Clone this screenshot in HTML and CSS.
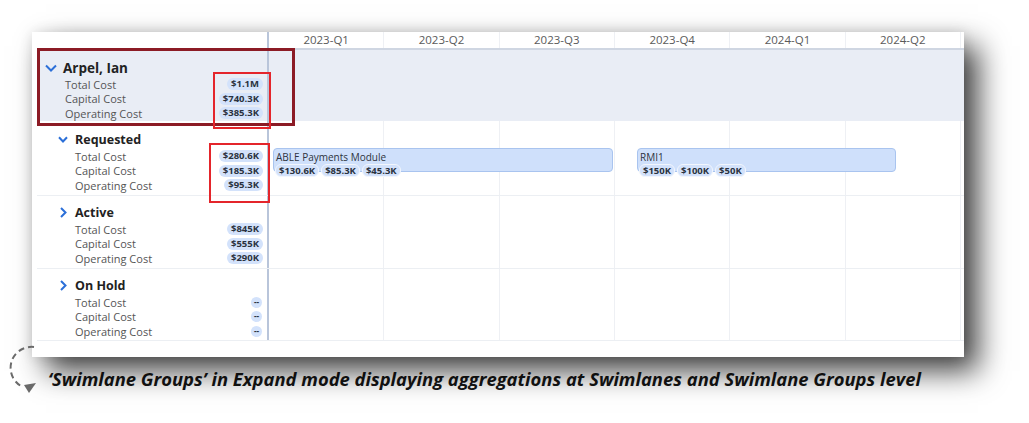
FILE: index.html
```html
<!DOCTYPE html>
<html lang="en">
<head>
    <meta charset="UTF-8">
    <meta name="viewport" content="width=device-width, initial-scale=1.0">
    <title>Swimlane Groups</title>
    <link rel="stylesheet" href="styles.css">
</head>
<body>
    <div class="page">
        <div class="board">
            <div class="head">
                <div class="head-left"></div>
                <div class="quarters">
                    <div class="q">2023-Q1</div>
                    <div class="q">2023-Q2</div>
                    <div class="q">2023-Q3</div>
                    <div class="q">2023-Q4</div>
                    <div class="q">2024-Q1</div>
                    <div class="q">2024-Q2</div>
                </div>
            </div>

            <div class="lanes">
                <!-- group level -->
                <div class="lane group">
                    <div class="info">
                        <div class="title">
                            <svg class="chev" width="12" height="8" viewBox="0 0 12 8"><polyline points="1,1.5 6,6.5 11,1.5" /></svg>
                            Arpel, Ian
                        </div>
                        <div class="metric"><span>Total Cost</span><span class="pill">$1.1M</span></div>
                        <div class="metric"><span>Capital Cost</span><span class="pill">$740.3K</span></div>
                        <div class="metric"><span>Operating Cost</span><span class="pill">$385.3K</span></div>
                    </div>
                    <div class="track"></div>
                </div>

                <div class="lane first">
                    <div class="info">
                        <div class="title">
                            <svg class="chev" width="10" height="7" viewBox="0 0 10 7"><polyline points="1,1.2 5,5.5 9,1.2" /></svg>
                            Requested
                        </div>
                        <div class="metric"><span>Total Cost</span><span class="pill">$280.6K</span></div>
                        <div class="metric"><span>Capital Cost</span><span class="pill">$185.3K</span></div>
                        <div class="metric"><span>Operating Cost</span><span class="pill">$95.3K</span></div>
                    </div>
                    <div class="track">
                        <div class="bar" style="left: 4px; width: 340px;">
                            <div class="bar-name">ABLE Payments Module</div>
                            <div class="bar-pills">
                                <span class="pill">$130.6K</span><span class="pill">$85.3K</span><span class="pill">$45.3K</span>
                            </div>
                        </div>
                        <div class="bar" style="left: 368px; width: 259px;">
                            <div class="bar-name">RMI1</div>
                            <div class="bar-pills">
                                <span class="pill">$150K</span><span class="pill">$100K</span><span class="pill">$50K</span>
                            </div>
                        </div>
                    </div>
                </div>

                <div class="lane">
                    <div class="info">
                        <div class="title">
                            <svg class="chev" width="10" height="11" viewBox="0 0 10 11"><polyline points="3,1 7.5,5.5 3,10" /></svg>
                            Active
                        </div>
                        <div class="metric"><span>Total Cost</span><span class="pill">$845K</span></div>
                        <div class="metric"><span>Capital Cost</span><span class="pill">$555K</span></div>
                        <div class="metric"><span>Operating Cost</span><span class="pill">$290K</span></div>
                    </div>
                    <div class="track"></div>
                </div>

                <div class="lane last">
                    <div class="info">
                        <div class="title">
                            <svg class="chev" width="10" height="11" viewBox="0 0 10 11"><polyline points="3,1 7.5,5.5 3,10" /></svg>
                            On Hold
                        </div>
                        <div class="metric"><span>Total Cost</span><span class="pill empty">--</span></div>
                        <div class="metric"><span>Capital Cost</span><span class="pill empty">--</span></div>
                        <div class="metric"><span>Operating Cost</span><span class="pill empty">--</span></div>
                    </div>
                    <div class="track"></div>
                </div>
            </div>

            <!-- highlight frames -->
            <div class="mark mark-group"></div>
            <div class="mark mark-sum-group"></div>
            <div class="mark mark-sum-lane"></div>
        </div>

        <p class="caption">‘Swimlane Groups’ in Expand mode displaying aggregations at Swimlanes and Swimlane Groups level</p>

        <svg class="loop" width="60" height="70" viewBox="0 0 60 70">
            <path d="M34 17 A21 21 0 0 0 21 56" />
            <polygon points="24,55 36,53 29,63" />
        </svg>
    </div>
</body>
</html>
```

FILE: styles.css
```css
body {
    margin: 0;
    background-color: #fff;
    font-family: "Open Sans", Arial, sans-serif;
}
.page {
    position: relative;
    width: 1029px;
    height: 423px;
    overflow: hidden;
    padding-top: 32px;
    box-sizing: border-box;
}
.board {
    position: relative;
    width: 932px;
    height: 325px;
    margin-left: 32px;
    background-color: #fff;
    box-shadow: 14px 14px 28px rgba(0, 0, 0, 0.75), 0 0 12px rgba(0, 0, 0, 0.1);
}

/* timeline header */
.head {
    display: grid;
    grid-template-columns: 235px 1fr;
    height: 18px;
}
.quarters {
    display: grid;
    grid-template-columns: repeat(6, 115.33px);
    border-left: 2px solid #b9c5da;
    border-bottom: 2px solid #cfd6e2;
}
.q {
    font-size: 11.5px;
    line-height: 16px;
    color: #5a5a5a;
    text-align: center;
    border-right: 1px solid #eef0f4;
}

/* swimlanes */
.lanes {
    margin-left: 5px;
}
.lane {
    display: grid;
    grid-template-columns: 230px 1fr;
    height: 73px;
    box-sizing: border-box;
    border-bottom: 1px solid #eceff3;
}
.lane.first {
    height: 75px;
}
.lane.last {
    height: 72px;
}
.lane.group {
    height: 71px;
    border-bottom: none;
    background-color: #e9edf5;
}
.info {
    padding: 7px 4px 0 21px;
}
.first .info {
    padding-top: 9px;
}
.group .info {
    padding: 8px 4px 0 8px;
}
.title {
    display: flex;
    align-items: center;
    gap: 7px;
    height: 19px;
    font-size: 12.5px;
    font-weight: bold;
    color: #222;
}
.group .title {
    gap: 6px;
    font-size: 13.5px;
}
.chev {
    fill: none;
    stroke: #2b6fd8;
    stroke-width: 2;
}
.metric {
    display: flex;
    justify-content: space-between;
    align-items: center;
    height: 14.5px;
    padding-left: 17px;
    font-size: 11px;
    color: #555;
}
.group .metric {
    padding-left: 20px;
}
.pill {
    display: inline-block;
    height: 12px;
    line-height: 12px;
    padding: 0 4px;
    border-radius: 6px;
    background-color: #d3e2fb;
    color: #2a3240;
    font-size: 9.5px;
    font-weight: bold;
}
.pill.empty {
    width: 11px;
    height: 11px;
    padding: 0;
    line-height: 9px;
    font-size: 8px;
    text-align: center;
    margin-right: 1px;
}
.track {
    position: relative;
    border-left: 2px solid #b9c5da;
    background-image: repeating-linear-gradient(to right, transparent 0 114.33px, #eef0f4 114.33px 115.33px);
}
.group .track {
    background-image: none;
}

/* timeline items */
.bar {
    position: absolute;
    top: 27px;
    height: 24px;
    box-sizing: border-box;
    padding: 2px 1px 0;
    background-color: #cfe0fb;
    border: 1px solid #a9c4ef;
    border-radius: 4px;
}
.bar-name {
    font-size: 10px;
    line-height: 12px;
    padding-left: 1px;
    color: #2e3440;
}
.bar-pills {
    display: flex;
    gap: 2px;
    margin-top: 1px;
}
.bar-pills .pill {
    border: 1px solid #f2f6fd;
    height: 11px;
    line-height: 11px;
    font-size: 9.5px;
    padding: 0 3px;
}

/* highlight frames */
.mark {
    position: absolute;
    box-sizing: border-box;
}
.mark-group {
    left: 5px;
    top: 16px;
    width: 258px;
    height: 78px;
    border: 3px solid #8c1b25;
}
.mark-sum-group {
    left: 181px;
    top: 40px;
    width: 58px;
    height: 57px;
    border: 2.5px solid #e4252b;
}
.mark-sum-lane {
    left: 177px;
    top: 111px;
    width: 61px;
    height: 60px;
    border: 2.5px solid #e4252b;
}

.caption {
    margin: 9px 0 0 48px;
    font-family: "Open Sans", Arial, sans-serif;
    font-size: 18.4px;
    font-weight: bold;
    font-style: italic;
    color: #151515;
}
.loop {
    position: absolute;
    left: 0;
    top: 330px;
}
.loop path {
    fill: none;
    stroke: #6a6a6a;
    stroke-width: 2;
    stroke-dasharray: 6 4;
}
.loop polygon {
    fill: #6a6a6a;
}
```
